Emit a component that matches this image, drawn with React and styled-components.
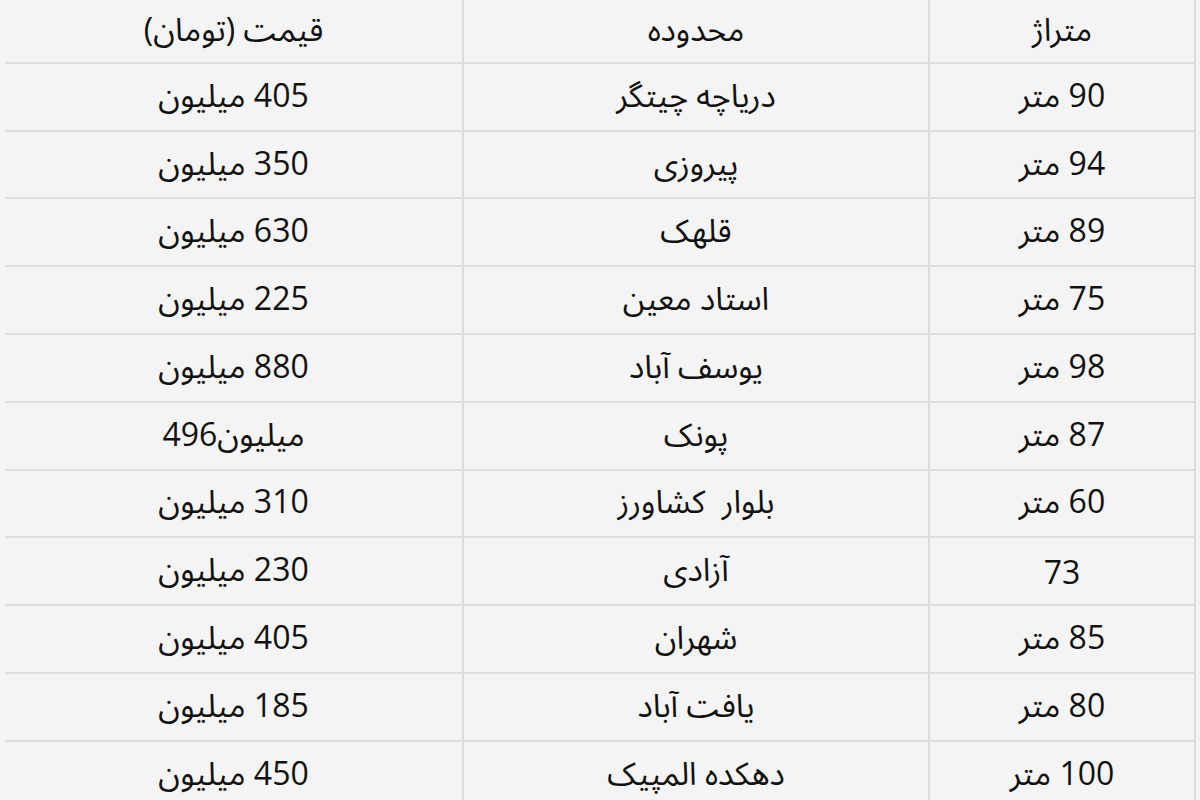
import React from "react";
import styled, { createGlobalStyle } from "styled-components";

const Global = createGlobalStyle`
  html, body { margin: 0; padding: 0; background: #f4f4f4; }
  body { width: 1200px; height: 800px; overflow: hidden; }
`;

const Page = styled.div`
  width: 1200px;
  height: 800px;
  overflow: hidden;
  background: #f4f4f4;
  padding-left: 7px;
  box-sizing: border-box;
`;

const Table = styled.div`
  direction: rtl;
  width: 1189px;
  margin-top: -4px;
  display: grid;
  grid-template-columns: 266px 466px 457px;
  grid-auto-rows: 67.8px;
  border-left: 2px solid #dddddd;
  border-right: 2px solid #dddddd;
  box-sizing: border-box;
  font-family: "Open Sans", "Noto Sans Arabic", "DejaVu Sans", sans-serif;
  color: #111111;
`;

const Cell = styled.div`
  display: flex;
  align-items: center;
  justify-content: center;
  border-bottom: 2px solid #dedede;
  border-left: ${(p) => (p.$last ? "none" : "2px solid #dedede")};
  box-sizing: border-box;
  font-size: 32px;
  padding-top: ${(p) => (p.$head ? "4px" : "0")};
  background: #f4f4f4;
  white-space: pre;
`;

const rows = [
  ["90 متر", "دریاچه چیتگر", "405 میلیون"],
  ["94 متر", "پیروزی", "350 میلیون"],
  ["89 متر", "قلهک", "630 میلیون"],
  ["75 متر", "استاد معین", "225 میلیون"],
  ["98 متر", "یوسف آباد", "880 میلیون"],
  ["87 متر", "پونک", "میلیون496"],
  ["60 متر", "بلوار  کشاورز", "310 میلیون"],
  ["73", "آزادی", "230 میلیون"],
  ["85 متر", "شهران", "405 میلیون"],
  ["80 متر", "یافت آباد", "185 میلیون"],
  ["100 متر", "دهکده المپیک", "450 میلیون"],
];

export default function App() {
  return (
    <Page>
      <Global />
      <Table>
        <Cell $head>متراژ</Cell>
        <Cell $head>محدوده</Cell>
        <Cell $head $last>قیمت (تومان)</Cell>
        {rows.map((r, i) => (
          <React.Fragment key={i}>
            <Cell>{r[0]}</Cell>
            <Cell>{r[1]}</Cell>
            <Cell $last>{r[2]}</Cell>
          </React.Fragment>
        ))}
      </Table>
    </Page>
  );
}
